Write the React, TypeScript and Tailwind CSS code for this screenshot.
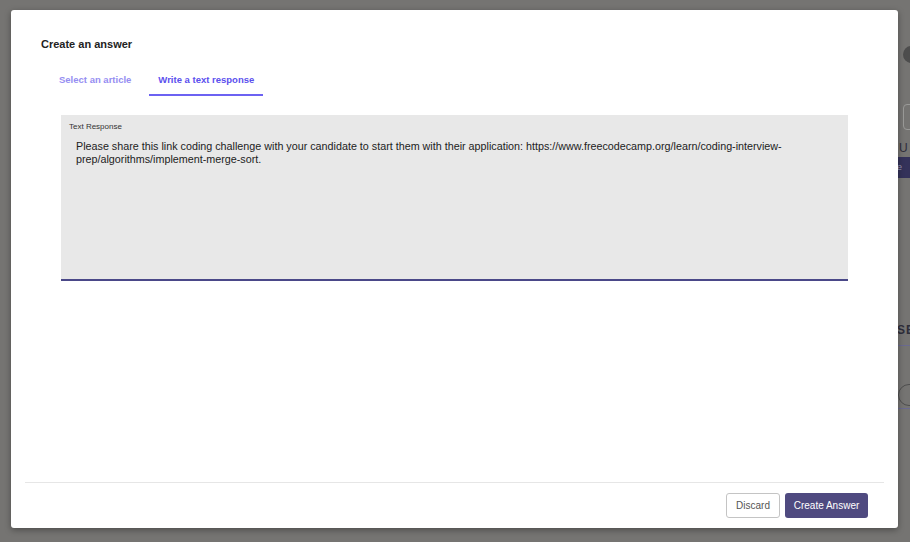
import React, { useState } from 'react';

const font = { fontFamily: '"Liberation Sans", Arial, Helvetica, sans-serif' };

// what peeks out from the page behind the modal, on the right edge
const BackdropPeek: React.FC = () => (
  <div className="absolute right-0 top-0 h-full w-[14px] overflow-hidden">
    <div className="absolute left-[7px] top-[46px] h-[17px] w-[17px] rounded-full bg-[#4d4d4d]" />
    <div className="absolute left-[7px] top-[104px] h-[26px] w-[20px] rounded-sm border border-[#9a9a98]" />
    <div className="absolute left-[3px] top-[142px] text-[12px] leading-none text-[#2d2d3a]">U</div>
    <div className="absolute left-0 top-[157px] h-[21px] w-[14px] bg-[#34325a] pl-[1px] text-[9px] leading-[21px] text-[#9c9ab8]">e</div>
    <div className="absolute left-[1px] top-[324px] text-[12px] font-bold leading-none tracking-[1px] text-[#2d2d3a]">SE</div>
    <div className="absolute left-[2px] top-[345px] h-px w-[12px] bg-[#6a6a90]" />
    <div className="absolute left-[2px] top-[384px] h-[22px] w-[30px] rounded-full border border-[#4e4e4e]" />
    <div className="absolute left-0 top-[408px] h-px w-[14px] bg-[#6a6a90]" />
  </div>
);

const tabs = ['Select an article', 'Write a text response'];

export default function App() {
  const [active, setActive] = useState(1);

  return (
    <div className="relative h-[542px] w-[910px] overflow-hidden bg-[#757472]" style={font}>
      <BackdropPeek />
      <div className="absolute left-[11px] top-[10px] flex h-[518px] w-[887px] flex-col rounded-[3px] bg-white shadow-[0_2px_6px_rgba(0,0,0,0.35)]">
        <h2 className="px-[30px] pt-[27px] text-[11px] font-bold leading-[14px] text-[#222]">Create an answer</h2>

        <div className="ml-[39px] mt-[14px] flex gap-[9px]">
          {tabs.map((t, i) => (
            <button
              key={t}
              onClick={() => setActive(i)}
              className={`border-b-2 px-[9px] pb-[7px] pt-[8px] text-[9.5px] font-bold leading-[14px] ${
                active === i ? 'border-[#6c62f2] text-[#5b50ee]' : 'border-transparent text-[#968ef2]'
              }`}
            >
              {t}
            </button>
          ))}
        </div>

        <div className="ml-[50px] mt-[19px] h-[166px] w-[787px] border-b-2 border-[#4a4888] bg-[#e8e8e8]">
          <div className="pl-[8px] pt-[7px] text-[8px] leading-[10px] text-[#333]">Text Response</div>
          <p className="pl-[15px] pt-[8px] text-[10.75px] leading-[13px] text-[#222]">
            Please share this link coding challenge with your candidate to start them with their application: https://www.freecodecamp.org/learn/coding-interview-
            <br />
            prep/algorithms/implement-merge-sort.
          </p>
        </div>

        <div className="flex-1" />

        <div className="mx-[14px] h-px bg-[#e6e6e6]" />
        <div className="flex justify-end gap-[5px] pb-[10px] pr-[30px] pt-[10px]">
          <button className="h-[25px] w-[54px] rounded-[3px] border border-[#c4c4c4] bg-white text-[10px] text-[#555]">
            Discard
          </button>
          <button className="h-[25px] w-[83px] rounded-[3px] bg-[#4f4a80] text-[10px] text-white">
            Create Answer
          </button>
        </div>
      </div>
    </div>
  );
}
